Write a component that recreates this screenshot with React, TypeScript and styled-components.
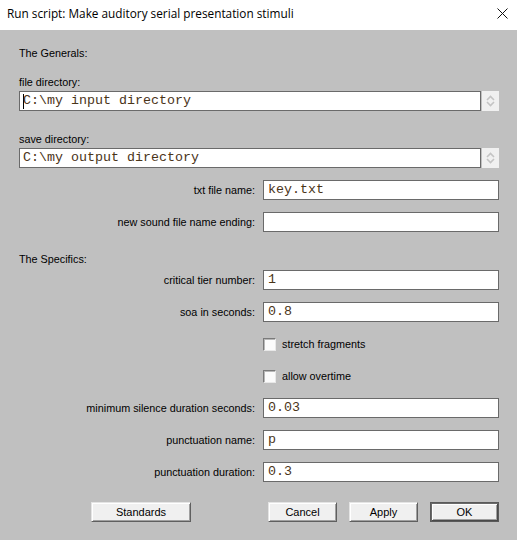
import React from 'react';
import styled, { createGlobalStyle } from 'styled-components';

const GlobalStyle = createGlobalStyle`
  html, body {
    margin: 0;
    padding: 0;
    background: #c0c0c0;
  }
`;

const labelFont = `"Liberation Sans", Arial, sans-serif`;
const monoFont = `"Liberation Mono", "Courier New", monospace`;

interface FieldProps {
  label: string;
  value?: string;
}

const LabeledField: React.FC<FieldProps> = ({ label, value }) => (
  <Row>
    <RowLabel>{label}</RowLabel>
    <TextBox>{value}</TextBox>
  </Row>
);

const CheckRow: React.FC<{ label: string }> = ({ label }) => (
  <Row>
    <span />
    <CheckLabel>
      <CheckBox />
      {label}
    </CheckLabel>
  </Row>
);

const Spinner: React.FC = () => (
  <SpinBox>
    <svg width="9" height="14" viewBox="0 0 9 14">
      <path d="M1 6 L4.5 2.5 L8 6" fill="none" stroke="#c4c4c4" strokeWidth="1.6" />
      <path d="M1 8 L4.5 11.5 L8 8" fill="none" stroke="#c4c4c4" strokeWidth="1.6" />
    </svg>
  </SpinBox>
);

const App: React.FC = () => (
  <>
    <GlobalStyle />
    <Window>
      <TitleBar>
        <Title>Run script: Make auditory serial presentation stimuli</Title>
        <CloseIcon width="11" height="11" viewBox="0 0 11 11">
          <path d="M0.5 0.5 L10.5 10.5 M10.5 0.5 L0.5 10.5" stroke="#111" strokeWidth="1" />
        </CloseIcon>
      </TitleBar>

      <Form>
        <SectionTitle>The Generals:</SectionTitle>

        <FieldCaption>file directory:</FieldCaption>
        <WideField>
          <WideBox>
            <Caret />
            C:\my input directory
          </WideBox>
          <Spinner />
        </WideField>

        <FieldCaption $top={20}>save directory:</FieldCaption>
        <WideField>
          <WideBox>C:\my output directory</WideBox>
          <Spinner />
        </WideField>

        <Rows $top={12}>
          <LabeledField label="txt file name:" value="key.txt" />
          <LabeledField label="new sound file name ending:" />
        </Rows>

        <SectionTitle $top={19}>The Specifics:</SectionTitle>

        <Rows $top={3}>
          <LabeledField label="critical tier number:" value="1" />
          <LabeledField label="soa in seconds:" value="0.8" />
          <CheckRow label="stretch fragments" />
          <CheckRow label="allow overtime" />
          <LabeledField label="minimum silence duration seconds:" value="0.03" />
          <LabeledField label="punctuation name:" value="p" />
          <LabeledField label="punctuation duration:" value="0.3" />
        </Rows>

        <ButtonBar>
          <Button $width={100}>Standards</Button>
          <ButtonGroup>
            <Button>Cancel</Button>
            <Button>Apply</Button>
            <Button $primary>OK</Button>
          </ButtonGroup>
        </ButtonBar>
      </Form>
    </Window>
  </>
);

export default App;

const Window = styled.div`
  width: 517px;
  height: 540px;
  background: #c0c0c0;
  display: flex;
  flex-direction: column;
  overflow: hidden;
`;

const TitleBar = styled.div`
  height: 30px;
  background: #ffffff;
  display: flex;
  align-items: center;
  padding: 0 8px 4px 7px;
  box-sizing: border-box;
`;

const Title = styled.span`
  font-family: "Open Sans", "Liberation Sans", sans-serif;
  font-size: 11.8px;
  color: #000;
  flex: 1;
`;

const CloseIcon = styled.svg`
  margin-right: 1px;
`;

const Form = styled.div`
  display: flex;
  flex-direction: column;
  padding: 15px 18px 0 19px;
  font-family: ${labelFont};
  font-size: 10.8px;
  color: #000;
`;

const SectionTitle = styled.div<{ $top?: number }>`
  height: 16px;
  line-height: 16px;
  margin-top: ${p => p.$top ?? 0}px;
`;

const FieldCaption = styled.div<{ $top?: number }>`
  height: 16px;
  line-height: 16px;
  margin-top: ${p => p.$top ?? 13}px;
  margin-bottom: 1px;
`;

const WideField = styled.div`
  display: flex;
  gap: 1px;
  height: 20px;
`;

const TextBox = styled.div`
  box-sizing: border-box;
  height: 20px;
  background: #fff;
  border: 1px solid #6a6a6a;
  padding: 0 4px;
  font-family: ${monoFont};
  font-size: 13.33px;
  line-height: 18px;
  color: #4a3418;
  white-space: pre;
  overflow: hidden;
`;

const WideBox = styled(TextBox)`
  flex: 1;
  padding-left: 3px;
  display: flex;
  align-items: center;
`;

const Caret = styled.span`
  display: inline-block;
  width: 1px;
  height: 15px;
  background: #000;
  margin-right: -1px;
`;

const SpinBox = styled.div`
  width: 17px;
  height: 20px;
  background: #f0f0f0;
  display: flex;
  align-items: center;
  justify-content: center;
`;

const Rows = styled.div<{ $top?: number }>`
  display: flex;
  flex-direction: column;
  gap: 12px;
  margin-top: ${p => p.$top ?? 0}px;
`;

const Row = styled.div`
  display: grid;
  grid-template-columns: 236px 236px;
  column-gap: 8px;
  align-items: center;
  height: 20px;
`;

const RowLabel = styled.span`
  text-align: right;
  white-space: nowrap;
`;

const CheckLabel = styled.label`
  display: flex;
  align-items: center;
  gap: 6px;
`;

const CheckBox = styled.span`
  display: inline-block;
  box-sizing: border-box;
  width: 13px;
  height: 13px;
  background: #fbfbfb;
  border: 1px solid;
  border-color: #7a7a7a #e8e8e8 #e8e8e8 #7a7a7a;
  box-shadow: inset 1px 1px 0 #b8b8b8;
`;

const ButtonBar = styled.div`
  display: flex;
  align-items: center;
  margin-top: 20px;
  padding-left: 72px;
`;

const ButtonGroup = styled.div`
  display: flex;
  gap: 12px;
  margin-left: auto;
`;

const Button = styled.button<{ $width?: number; $primary?: boolean }>`
  box-sizing: border-box;
  width: ${p => p.$width ?? 69}px;
  height: 20px;
  padding: 0;
  background: #f0f0f0;
  font-family: ${labelFont};
  font-size: 11px;
  color: #000;
  border: 1px solid;
  border-color: ${p => (p.$primary ? '#5a5a5a' : '#e4e4e4 #5f5f5f #5f5f5f #e4e4e4')};
  box-shadow: ${p =>
    p.$primary
      ? 'inset 1px 1px 0 #6a6a6a, inset -1px -1px 0 #4a4a4a, inset 2px 2px 0 #fff, inset -2px -2px 0 #a0a0a0'
      : 'inset 1px 1px 0 #fff, inset -1px -1px 0 #a0a0a0'};
`;
